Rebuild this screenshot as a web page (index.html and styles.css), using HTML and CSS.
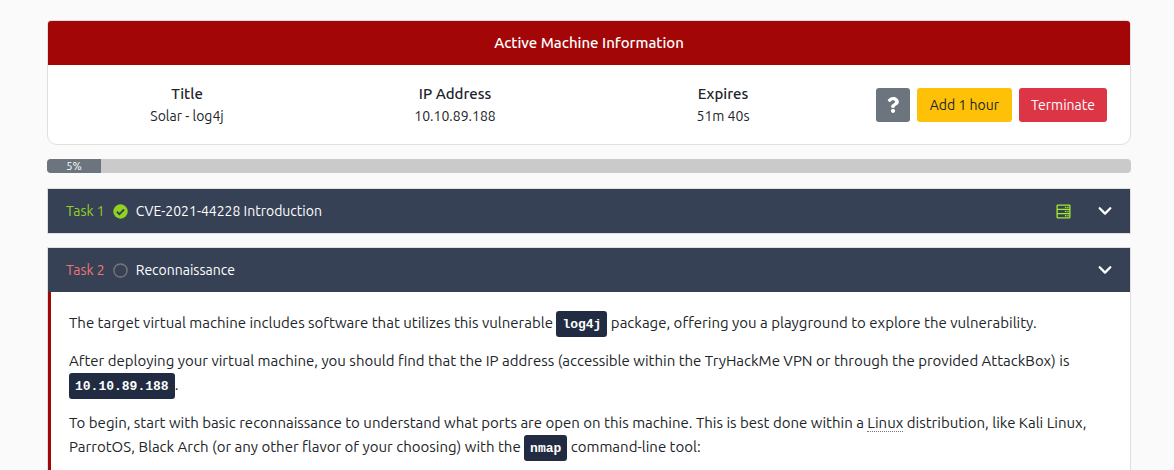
FILE: index.html
```html
<!DOCTYPE html>
<html lang="en">
<head>
<meta charset="utf-8">
<meta name="viewport" content="width=device-width, initial-scale=1">
<title>Solar - log4j</title>
<link rel="stylesheet" href="styles.css">
</head>
<body>
<main class="room">
  <section class="machine">
    <h2 class="machine-header">Active Machine Information</h2>
    <div class="machine-body">
      <dl class="machine-fact"><dt>Title</dt><dd>Solar - log4j</dd></dl>
      <dl class="machine-fact"><dt>IP Address</dt><dd>10.10.89.188</dd></dl>
      <dl class="machine-fact"><dt>Expires</dt><dd>51m 40s</dd></dl>
      <div class="machine-actions">
        <button type="button" class="btn btn-help" aria-label="Help">
          <svg class="icon-help" viewBox="0 0 384 512" aria-hidden="true"><path fill="currentColor" d="M202 0C122 0 70 33 29 91c-7 11-5 25 5 33l43 33c10 8 25 6 33-4 25-32 44-50 83-50 31 0 69 20 69 50 0 23-19 34-49 51-35 20-82 45-82 107v10c0 13 11 24 24 24h73c13 0 24-11 24-24v-6c0-43 126-45 126-161C378 66 287 0 202 0zM192 374c-38 0-69 31-69 69s31 69 69 69 69-31 69-69-31-69-69-69z"/></svg>
        </button>
        <button type="button" class="btn btn-extend">Add 1 hour</button>
        <button type="button" class="btn btn-terminate">Terminate</button>
      </div>
    </div>
  </section>

  <div class="progress" role="progressbar" aria-label="Room progress" aria-valuenow="5" aria-valuemin="0" aria-valuemax="100">
    <div class="progress-bar" style="width: 5%">5%</div>
  </div>

  <section class="task">
    <button type="button" class="task-header" aria-expanded="false">
      <span class="task-number done">Task 1</span>
      <svg class="icon-status done" viewBox="0 0 16 16" aria-hidden="true"><circle cx="8" cy="8" r="7.7" fill="currentColor"/><path d="M4.2 8.3l2.6 2.6 5-5" fill="none" stroke="#364156" stroke-width="2"/></svg>
      <span class="task-title">CVE-2021-44228 Introduction</span>
      <svg class="icon-server" viewBox="0 0 16 16" aria-hidden="true"><g fill="none" stroke="currentColor" stroke-width="1.4"><rect x="1.2" y="1.2" width="13.6" height="13.6" rx=".7"/><path d="M1 5.7h14M1 10.3h14"/></g><path fill="currentColor" d="M9.5 2.8H11v1.4H9.5zM12 2.8h1.5v1.4H12zM9.5 7.3H11v1.4H9.5zM12 7.3h1.5v1.4H12zM9.5 11.8H11v1.4H9.5zM12 11.8h1.5v1.4H12z"/></svg>
      <svg class="icon-chevron" viewBox="0 0 14 14" aria-hidden="true"><path d="M1.7 4.3L7 9.6l5.3-5.3" fill="none" stroke="currentColor" stroke-width="2.3" stroke-linecap="round" stroke-linejoin="round"/></svg>
    </button>
  </section>

  <section class="task task-open">
    <button type="button" class="task-header" aria-expanded="true">
      <span class="task-number pending">Task 2</span>
      <svg class="icon-status open" viewBox="0 0 16 16" aria-hidden="true"><circle cx="8" cy="8" r="7" fill="none" stroke="currentColor" stroke-width="1.5"/></svg>
      <span class="task-title">Reconnaissance</span>
      <svg class="icon-chevron" viewBox="0 0 14 14" aria-hidden="true"><path d="M1.7 4.3L7 9.6l5.3-5.3" fill="none" stroke="currentColor" stroke-width="2.3" stroke-linecap="round" stroke-linejoin="round"/></svg>
    </button>
    <div class="task-body">
      <p>The target virtual machine includes software that utilizes this vulnerable <code>log4j</code> package, offering you a playground to explore the vulnerability.</p>
      <p>After deploying your virtual machine, you should find that the IP address (accessible within the TryHackMe VPN or through the provided AttackBox) is <code>10.10.89.188</code>.</p>
      <p>To begin, start with basic reconnaissance to understand what ports are open on this machine. This is best done within a <span class="term">Linux</span> distribution, like Kali Linux, ParrotOS, Black Arch (or any other flavor of your choosing) with the <code>nmap</code> command-line tool:</p>
    </div>
  </section>
</main>
</body>
</html>
```
FILE: styles.css
```css
* {
  box-sizing: border-box;
}

body {
  margin: 0;
  background: #fafafa;
  color: #212529;
  font-family: Ubuntu, "Noto Sans", "Open Sans", sans-serif;
  font-size: 15px;
  line-height: 22px;
}

.room {
  display: flex;
  flex-direction: column;
  min-height: 100vh;
  padding: 20px 43px 0 47px;
}

.machine {
  overflow: hidden;
  border: 1px solid #dfdfdf;
  border-radius: 4px 4px 10px 10px;
  background: #fff;
}

.machine-header {
  margin: 0;
  padding: 11px;
  background: #a30606;
  color: #fff;
  font-size: 15px;
  font-weight: 500;
  text-align: center;
}

.machine-body {
  display: grid;
  grid-template-columns: repeat(4, 1fr);
  align-items: center;
  padding: 18px 5px 17px;
}

.machine-fact {
  margin: 0;
  font-size: 14px;
  text-align: center;
}

.machine-fact dt {
  font-size: 15px;
  font-weight: 500;
}

.machine-fact dd {
  margin: 0;
}

.machine-actions {
  display: flex;
  justify-content: flex-end;
  gap: 7px;
  padding-right: 18px;
}

.btn {
  height: 34px;
  padding: 0 12px;
  border: 0;
  border-radius: 3px;
  color: #fff;
  font: inherit;
  font-size: 14px;
  white-space: nowrap;
  cursor: pointer;
}

.btn-help {
  display: grid;
  place-items: center;
  padding: 0 11px;
  background: #6c757d;
}

.btn-extend {
  padding: 0 13px;
  background: #ffc107;
  color: #212529;
}

.btn-terminate {
  background: #dc3545;
}

.icon-help {
  width: 12px;
  height: 16px;
}

.progress {
  margin-top: 14px;
  overflow: hidden;
  border-radius: 4px;
  background: #cacaca;
}

.progress-bar {
  background: #6c757d;
  color: #fff;
  font-size: 11px;
  line-height: 14px;
  text-align: center;
}

.task {
  margin-top: 15px;
  border: 1px solid #dfdfdf;
}

.task-open {
  display: flex;
  flex: 1;
  flex-direction: column;
  margin-top: 13px;
  border-bottom: 0;
}

.task-header {
  display: flex;
  align-items: center;
  gap: 8px;
  width: 100%;
  padding: 11px 18px;
  border: 0;
  background: #364156;
  color: #fff;
  font: inherit;
  font-size: 14px;
  text-align: left;
  cursor: pointer;
}

.task-title {
  flex: 1;
}

.done {
  color: #92d221;
}

.pending {
  color: #ee7672;
}

.open {
  color: #777;
}

.icon-status {
  width: 15px;
  height: 15px;
}

.icon-server {
  width: 15px;
  height: 15px;
  margin-right: 19px;
  color: #a3ea2a;
}

.icon-chevron {
  width: 14px;
  height: 14px;
}

.task-body {
  flex: 1;
  padding: 19px 18px 0;
  border-left: 3px solid #a30606;
  background: #fff;
  line-height: 24px;
}

.task-body p {
  margin: 0 0 14px;
}

.task-body p:last-child {
  margin-bottom: 0;
}

code {
  padding: 6px 6px 5px;
  border-radius: 3px;
  background: #212c42;
  color: #fff;
  font-family: "Liberation Mono", monospace;
  font-size: 13px;
  font-weight: 700;
  line-height: 14px;
}

.term {
  border-bottom: 1px dotted #777;
}
```
